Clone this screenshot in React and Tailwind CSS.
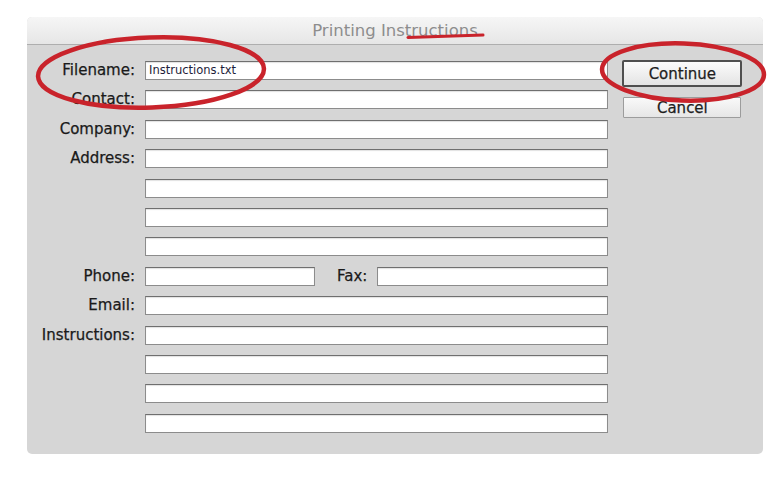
import React from 'react';

const font = { fontFamily: '"DejaVu Sans", "Liberation Sans", sans-serif' };

function Field({ className = '', value }) {
  return (
    <div
      className={`h-[19px] bg-white border border-[#8c8c8c] border-t-[#6f6f6f] shadow-[inset_0_1px_1px_rgba(0,0,0,0.12)] ${className}`}
    >
      {value && (
        <div className="pl-[3px] pt-[2px] text-[11.5px] leading-[13px] text-[#1d1d3a]">{value}</div>
      )}
    </div>
  );
}

function Row({ label, children }) {
  return (
    <div className="flex items-center">
      <div className="w-[108px] text-right text-[15px] leading-[19px] text-[#1a1a1a] [-webkit-text-stroke:0.25px_#1a1a1a]">{label}</div>
      <div className="ml-[10px] flex items-center">{children}</div>
    </div>
  );
}

export default function App() {
  const rows = [
    { label: 'Filename:', value: 'Instructions.txt' },
    { label: 'Contact:' },
    { label: 'Company:' },
    { label: 'Address:' },
    { label: '' },
    { label: '' },
    { label: '' },
  ];
  const after = [{ label: 'Email:' }, { label: 'Instructions:' }, { label: '' }, { label: '' }, { label: '' }];

  return (
    <div className="relative w-[781px] h-[495px] bg-white overflow-hidden" style={font}>
      <div className="ml-[27px] pt-[17px]">
        <div className="w-[736px] h-[437px] rounded-[5px] bg-[#d6d6d6] overflow-hidden flex flex-col">
          {/* title bar */}
          <div className="h-[28px] shrink-0 bg-gradient-to-b from-[#f6f6f6] to-[#e6e6e6] border-b border-[#aeaeae] flex items-center justify-center">
            <span className="text-[16.5px] leading-[20px] text-[#8d8d8d] pt-[1px]">Printing Instructions</span>
          </div>

          {/* body */}
          <div className="flex flex-1">
            <div className="pt-[16px] flex flex-col gap-[10.4px]">
              {rows.map((r, i) => (
                <Row key={i} label={r.label}>
                  <Field className="w-[463px]" value={r.value} />
                </Row>
              ))}
              <Row label="Phone:">
                <Field className="w-[170px]" />
                <span className="ml-[22px] text-[15px] leading-[19px] text-[#1a1a1a] [-webkit-text-stroke:0.25px_#1a1a1a]">Fax:</span>
                <Field className="ml-[10px] w-[231px]" />
              </Row>
              {after.map((r, i) => (
                <Row key={i} label={r.label}>
                  <Field className="w-[463px]" />
                </Row>
              ))}
            </div>

            <div className="ml-[14px] pt-[15px] flex flex-col">
              <button className="w-[120px] h-[27px] rounded-[2px] border-2 border-[#4f4f4f] bg-gradient-to-b from-[#fbfbfb] to-[#e4e4e4] text-[15px] leading-[20px] text-[#1e1e1e] [-webkit-text-stroke:0.25px_#1e1e1e]">
                Continue
              </button>
              <button className="mt-[10px] ml-[1px] w-[118px] h-[21px] rounded-[1px] border border-[#9c9c9c] bg-gradient-to-b from-[#f9f9f9] to-[#e6e6e6] text-[15px] leading-[18px] text-[#1e1e1e] [-webkit-text-stroke:0.25px_#1e1e1e]">
                Cancel
              </button>
            </div>
          </div>
        </div>
      </div>

      {/* red hand-drawn annotations */}
      <svg className="absolute inset-0 pointer-events-none" width="781" height="495" viewBox="0 0 781 495">
        <ellipse cx="151" cy="72.5" rx="113" ry="35" fill="none" stroke="#c9232b" strokeWidth="4.5" transform="rotate(-2 151 72.5)" />
        <ellipse cx="683" cy="72" rx="81" ry="28.5" fill="none" stroke="#c9232b" strokeWidth="4.5" transform="rotate(2 683 72)" />
        <path d="M408 37.5 L483 35" stroke="#c9232b" strokeWidth="3" strokeLinecap="round" fill="none" />
      </svg>
    </div>
  );
}
